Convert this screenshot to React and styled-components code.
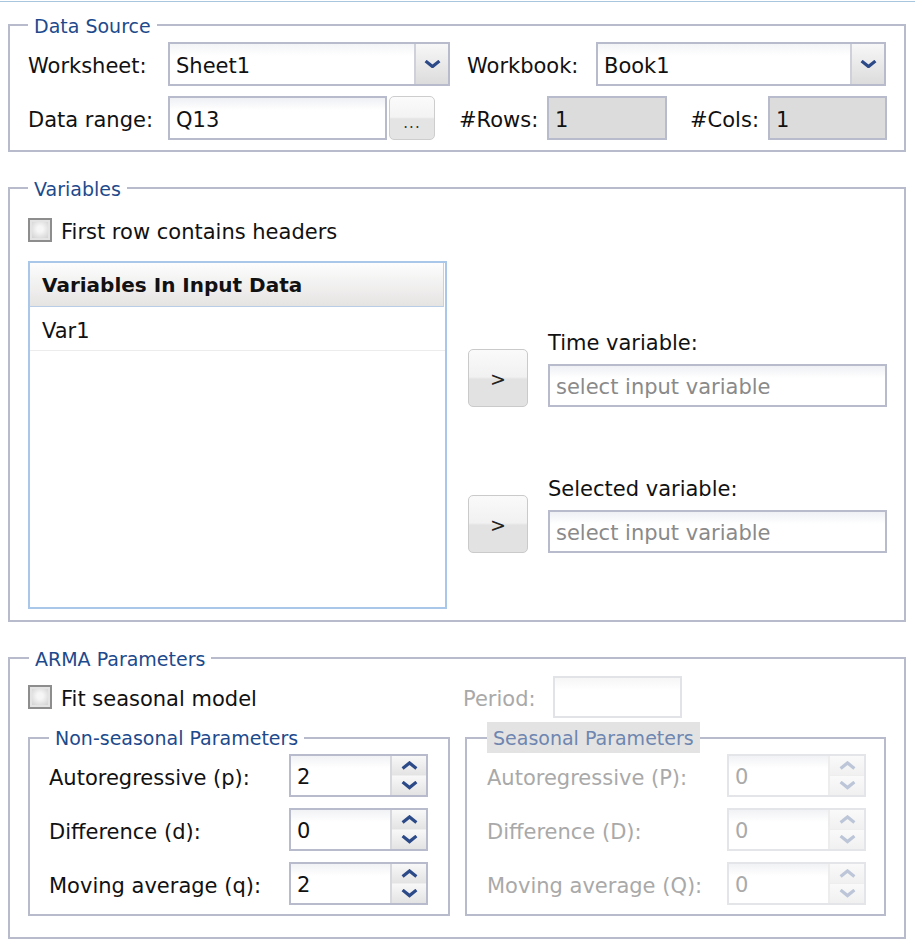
import React from "react";
import styled, { createGlobalStyle } from "styled-components";

const GlobalStyle = createGlobalStyle`
  body {
    margin: 0;
    background: #ffffff;
    font-family: "DejaVu Sans", "Noto Sans", sans-serif;
    color: #111111;
  }
`;

function Chevron({ up, disabled, width = 16 }) {
  const color = disabled ? "#bcc6d8" : "#2c4a88";
  return (
    <svg width={width} height={width / 2} viewBox="0 0 16 8">
      <path
        d={up ? "M1.5 7 L8 1.8 L14.5 7" : "M1.5 1 L8 6.2 L14.5 1"}
        fill="none"
        stroke={color}
        strokeWidth="3"
        strokeLinejoin="miter"
      />
    </svg>
  );
}

function Combo({ value, width }) {
  return (
    <ComboBox style={{ width }}>
      <ComboText>{value}</ComboText>
      <ComboArrow>
        <Chevron width={17} />
      </ComboArrow>
    </ComboBox>
  );
}

function Spinner({ value, disabled }) {
  return (
    <SpinBox $disabled={disabled}>
      <SpinText $disabled={disabled}>{value}</SpinText>
      <SpinButtons $disabled={disabled}>
        <SpinHalf $disabled={disabled}>
          <Chevron up disabled={disabled} width={17} />
        </SpinHalf>
        <SpinHalf $disabled={disabled}>
          <Chevron disabled={disabled} width={17} />
        </SpinHalf>
      </SpinButtons>
    </SpinBox>
  );
}

function Check({ label }) {
  return (
    <CheckRow>
      <CheckBox />
      <CheckText>{label}</CheckText>
    </CheckRow>
  );
}

const nonSeasonal = [
  ["Autoregressive (p):", "2"],
  ["Difference (d):", "0"],
  ["Moving average (q):", "2"],
];

const seasonal = [
  ["Autoregressive (P):", "0"],
  ["Difference (D):", "0"],
  ["Moving average (Q):", "0"],
];

function App() {
  return (
    <>
      <GlobalStyle />
      <Page>
        <Group $pad="4px 17px 10px 18px">
          <Legend>Data Source</Legend>
          <FormRow>
            <Label $w={140}>Worksheet:</Label>
            <Combo value="Sheet1" width={282} />
            <Label $w={129} $ml={17}>
              Workbook:
            </Label>
            <Combo value="Book1" width={290} />
          </FormRow>
          <FormRow>
            <Label $w={140}>Data range:</Label>
            <TextInput $w={219}>Q13</TextInput>
            <DotsButton>...</DotsButton>
            <Label $w={88} $ml={24}>
              #Rows:
            </Label>
            <ReadOnlyBox $w={120}>1</ReadOnlyBox>
            <Label $w={78} $ml={23}>
              #Cols:
            </Label>
            <ReadOnlyBox $w={119}>1</ReadOnlyBox>
          </FormRow>
        </Group>

        <Group $pad="14px 17px 11px 18px">
          <Legend>Variables</Legend>
          <Check label="First row contains headers" />
          <VarArea>
            <ListBox>
              <ListHeader>Variables In Input Data</ListHeader>
              <ListItem>Var1</ListItem>
            </ListBox>
            <Targets>
              <Target>
                <MoveButton>&gt;</MoveButton>
                <TargetField>
                  <FieldCaption>Time variable:</FieldCaption>
                  <Placeholder>select input variable</Placeholder>
                </TargetField>
              </Target>
              <Target>
                <MoveButton>&gt;</MoveButton>
                <TargetField>
                  <FieldCaption>Selected variable:</FieldCaption>
                  <Placeholder>select input variable</Placeholder>
                </TargetField>
              </Target>
            </Targets>
          </VarArea>
        </Group>

        <Group $pad="5px 17px 21px 19px">
          <Legend>ARMA Parameters</Legend>
          <SeasonRow>
            <SeasonCheck>
              <Check label="Fit seasonal model" />
            </SeasonCheck>
            <DisabledLabel>Period:</DisabledLabel>
            <PeriodBox />
          </SeasonRow>
          <ParamColumns>
            <SubGroup $pad="1px 19px 9px 19px">
              <SubLegend>Non-seasonal Parameters</SubLegend>
              <ParamGrid>
                {nonSeasonal.map(([label, value]) => (
                  <React.Fragment key={label}>
                    <ParamLabel>{label}</ParamLabel>
                    <Spinner value={value} />
                  </React.Fragment>
                ))}
              </ParamGrid>
            </SubGroup>
            <SubGroup $pad="1px 19px 9px 20px">
              <SubLegend $disabled>Seasonal Parameters</SubLegend>
              <ParamGrid>
                {seasonal.map(([label, value]) => (
                  <React.Fragment key={label}>
                    <ParamLabel $disabled>{label}</ParamLabel>
                    <Spinner value={value} disabled />
                  </React.Fragment>
                ))}
              </ParamGrid>
            </SubGroup>
          </ParamColumns>
        </Group>
      </Page>
    </>
  );
}

export default App;

const Page = styled.div`
  width: 915px;
  box-sizing: border-box;
  margin-top: 1px;
  border-top: 1px solid #a9c6df;
  padding: 10px 9px 0 8px;
  display: flex;
  flex-direction: column;
  gap: 23px;
  font-size: 21px;
`;

const Group = styled.fieldset`
  margin: 0;
  min-width: 0;
  padding: ${(p) => p.$pad};
  border: 2px solid #b8bbcb;
  display: flex;
  flex-direction: column;
  gap: 10px;
`;

const Legend = styled.legend`
  padding: 2px 6px 0;
  margin: 0;
  font-size: 19px;
  line-height: 24px;
  color: #1d4a8c;
`;

const FormRow = styled.div`
  display: flex;
  align-items: center;
  height: 44px;
`;

const Label = styled.div`
  flex: 0 0 ${(p) => p.$w}px;
  margin-left: ${(p) => p.$ml || 0}px;
  white-space: nowrap;
  padding-top: 4px;
  line-height: 26px;
`;

const ComboBox = styled.div`
  box-sizing: border-box;
  height: 44px;
  display: flex;
  border: 2px solid #b8bbcb;
  background: linear-gradient(#f3f4f6, #ffffff 12px);
`;

const ComboText = styled.div`
  flex: 1;
  padding-left: 6px;
  line-height: 44px;
  height: 40px;
`;

const ComboArrow = styled.div`
  width: 32px;
  display: flex;
  align-items: center;
  justify-content: center;
  border-left: 2px solid #cfd1da;
  background: linear-gradient(#f7f7f7, #dcdcdc);
`;

const TextInput = styled.div`
  box-sizing: border-box;
  width: ${(p) => p.$w}px;
  height: 44px;
  border: 2px solid #b8bbcb;
  padding-left: 6px;
  line-height: 44px;
  background: linear-gradient(#eef0f4, #ffffff 12px);
`;

const DotsButton = styled.div`
  box-sizing: border-box;
  width: 46px;
  height: 44px;
  margin-left: 2px;
  border: 1px solid #cdcdcd;
  border-radius: 5px;
  background: linear-gradient(#fbfbfb 0%, #f3f3f3 48%, #e4e4e4 52%, #e4e4e4 100%);
  font-size: 15px;
  letter-spacing: 1px;
  color: #333;
  display: flex;
  align-items: center;
  justify-content: center;
  padding-top: 10px;
`;

const ReadOnlyBox = styled.div`
  box-sizing: border-box;
  flex: 0 0 ${(p) => p.$w}px;
  height: 44px;
  border: 2px solid #b8bbcb;
  background: #dcdcdc;
  padding-left: 6px;
  line-height: 44px;
`;

const CheckRow = styled.div`
  display: flex;
  align-items: center;
  gap: 9px;
  height: 30px;
  white-space: nowrap;
`;

const CheckText = styled.span`
  padding-top: 3px;
  line-height: 26px;
`;

const CheckBox = styled.span`
  box-sizing: border-box;
  width: 24px;
  height: 24px;
  flex: 0 0 24px;
  border: 2px solid #8d8d8d;
  background: radial-gradient(circle at 50% 45%, #f6f6f6 20%, #d2d2d2 80%);
  box-shadow: inset 0 0 0 2px #e4e4e4;
`;

const VarArea = styled.div`
  display: flex;
  gap: 21px;
  margin-top: 6px;
`;

const ListBox = styled.div`
  box-sizing: border-box;
  flex: 0 0 419px;
  height: 348px;
  border: 2px solid #a9c7e8;
  background: #fff;
`;

const ListHeader = styled.div`
  height: 44px;
  box-sizing: border-box;
  padding-left: 12px;
  line-height: 45px;
  font-size: 20px;
  font-weight: 700;
  margin-right: 1px;
  border-bottom: 1px solid #b9cde6;
  border-right: 1px solid #d0d0d0;
  background: linear-gradient(#fdfdfd, #e6e4e3);
`;

const ListItem = styled.div`
  height: 44px;
  box-sizing: border-box;
  padding-left: 12px;
  line-height: 48px;
  border-bottom: 1px solid #ececec;
`;

const Targets = styled.div`
  flex: 1;
  display: flex;
  flex-direction: column;
  gap: 67px;
  padding-top: 67px;
`;

const Target = styled.div`
  display: flex;
  align-items: flex-end;
  gap: 20px;
`;

const MoveButton = styled.div`
  box-sizing: border-box;
  flex: 0 0 60px;
  height: 58px;
  border: 1px solid #cacaca;
  border-radius: 5px;
  background: linear-gradient(#fafafa 0%, #f1f1f1 48%, #e2e2e2 52%, #e2e2e2 100%);
  display: flex;
  align-items: center;
  justify-content: center;
  padding-top: 2px;
  font-size: 19px;
  color: #222;
`;

const TargetField = styled.div`
  flex: 1;
  display: flex;
  flex-direction: column;
  gap: 8px;
`;

const FieldCaption = styled.div`
  padding-top: 2px;
  line-height: 26px;
`;

const Placeholder = styled.div`
  box-sizing: border-box;
  height: 43px;
  border: 2px solid #b8bbcb;
  padding-left: 6px;
  line-height: 43px;
  color: #8a8a8a;
  background: linear-gradient(#eef0f4, #ffffff 12px);
`;

const SeasonRow = styled.div`
  display: flex;
  align-items: center;
  height: 42px;
`;

const SeasonCheck = styled.div`
  flex: 0 0 435px;
  margin-left: -1px;
`;

const DisabledLabel = styled.div`
  flex: 0 0 90px;
  color: #a9a9a9;
  padding-top: 4px;
  line-height: 26px;
`;

const PeriodBox = styled.div`
  box-sizing: border-box;
  width: 129px;
  height: 42px;
  border: 2px solid #e2e3e6;
  background: linear-gradient(#f6f6f6, #ffffff 12px);
`;

const ParamColumns = styled.div`
  display: grid;
  grid-template-columns: 422px 421px;
  gap: 15px;
  margin-left: -1px;
  margin-top: -6px;
`;

const SubGroup = styled.fieldset`
  margin: 0;
  min-width: 0;
  padding: ${(p) => p.$pad};
  border: 2px solid #b8bbcb;
`;

const SubLegend = styled.legend`
  padding: 4px 6px 3px;
  margin: 0;
  font-size: 19px;
  line-height: 24px;
  color: ${(p) => (p.$disabled ? "#6e86b0" : "#1d4a8c")};
  background: ${(p) => (p.$disabled ? "#e3e3e3" : "transparent")};
`;

const ParamGrid = styled.div`
  display: grid;
  grid-template-columns: 240px 139px;
  grid-auto-rows: 43px;
  row-gap: 11px;
  align-items: center;
`;

const ParamLabel = styled.div`
  white-space: nowrap;
  padding-top: 4px;
  line-height: 26px;
  color: ${(p) => (p.$disabled ? "#a9a9a9" : "#111")};
`;

const SpinBox = styled.div`
  box-sizing: border-box;
  height: 43px;
  display: flex;
  border: 2px solid ${(p) => (p.$disabled ? "#e4e5e8" : "#b8bbcb")};
  background: linear-gradient(#f1f2f5, #ffffff 12px);
`;

const SpinText = styled.div`
  flex: 1;
  padding-left: 6px;
  line-height: 43px;
  height: 39px;
  color: ${(p) => (p.$disabled ? "#aaaaaa" : "#111")};
`;

const SpinButtons = styled.div`
  width: 34px;
  display: flex;
  flex-direction: column;
  border-left: 2px solid ${(p) => (p.$disabled ? "#ededed" : "#d6d8de")};
`;

const SpinHalf = styled.div`
  flex: 1;
  display: flex;
  align-items: center;
  justify-content: center;
  background: ${(p) =>
    p.$disabled ? "linear-gradient(#fafafa, #f0f0f0)" : "linear-gradient(#f8f8f8, #e3e3e3)"};
  & + & {
    border-top: 1px solid ${(p) => (p.$disabled ? "#eeeeee" : "#d3d3d3")};
  }
`;
